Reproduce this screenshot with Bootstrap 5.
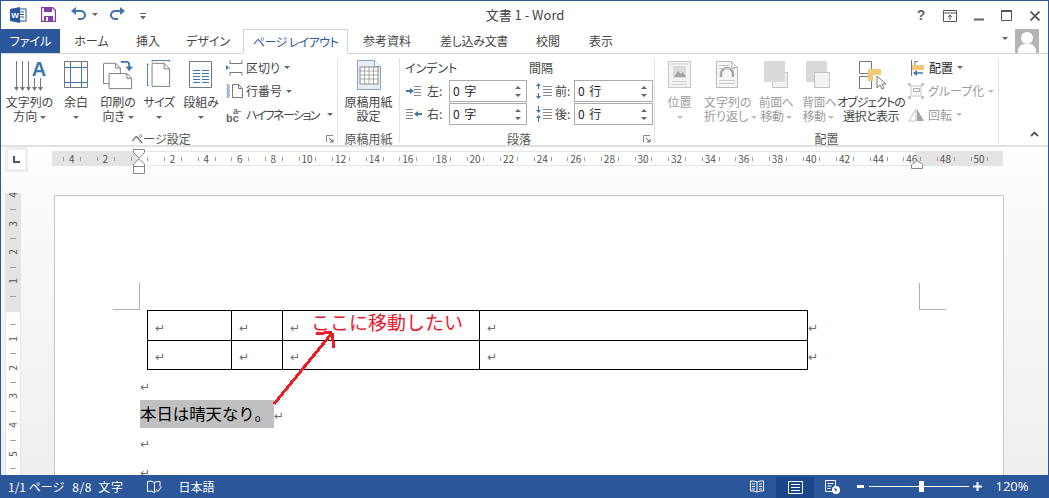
<!DOCTYPE html>
<html lang="ja">
<head>
<meta charset="UTF-8">
<title>文書 1 - Word</title>
<link href="https://cdn.jsdelivr.net/npm/bootstrap@5.3.0/dist/css/bootstrap.min.css" rel="stylesheet">
<style>
    html, body { height: 100%; overflow: hidden; }
    body { font-family: "Noto Sans CJK JP", "Liberation Sans", sans-serif; font-size: 12px; color: #444; background: #fff; font-feature-settings: "palt"; }
    .wd-app { width: 1049px; height: 498px; border: solid #2b579a; border-width: 1px 1px 0 1px; }
    svg { display: block; flex: none; }

    /* title bar */
    .wd-title { height: 28px; flex: none; }
    .wd-qat { width: 296px; padding: 6px 0 0 9px; }
    .wd-doc-name { font-size: 13px; line-height: 28px; width: 456px; text-align: center; }
    .wd-winbtns { margin-left: auto; padding: 6px 8px 0 0; }
    .wd-caret { display: inline-block; width: 0; height: 0; border-style: solid; border-width: 3px 3px 0 3px; border-color: #666 transparent transparent transparent; vertical-align: middle; }
    .wd-caret-off { border-top-color: #bbb; }

    /* tabs */
    .wd-tabs { height: 25px; flex: none; border-bottom: 1px solid #d4d4d4; }
    .wd-tab { height: 25px; line-height: 23px; text-align: center; color: #444; font-size: 12px; }
    .wd-tab-file { width: 59px; background: #2b579a; color: #fff; height: 24px; }
    .wd-tab-1 { width: 63px; } .wd-tab-2 { width: 50px; } .wd-tab-3 { width: 70px; }
    .wd-tab-on { width: 105px; border: 1px solid #d4d4d4; border-bottom-color: #fff; color: #2b579a; letter-spacing: -.6px; }
    .wd-tab-5 { width: 78px; } .wd-tab-6 { width: 96px; letter-spacing: -.3px; } .wd-tab-7 { width: 52px; } .wd-tab-8 { width: 54px; }
    .wd-acct { margin-left: auto; padding-right: 9px; }
    .wd-avatar { width: 24px; height: 24px; background: #b4b4b4; overflow: hidden; margin-left: 7px; }

    /* ribbon */
    .wd-ribbon { height: 93px; flex: none; border-bottom: 2px solid #e1e1e1; position: relative; padding-top: 4px; }
    .wd-group { height: 85px; position: relative; border-right: 1px solid #e1e1e1; }
    .wd-g-page { width: 337px; }
    .wd-g-sheet { width: 62px; }
    .wd-g-para { width: 255px; }
    .wd-g-arr { width: 344px; }
    .wd-g-body { height: 75px; }
    .wd-g-label { height: 10px; line-height: 12px; text-align: center; color: #555; }
    .wd-g-label-pad { padding-right: 16px; }
    .wd-launch { position: absolute; right: 3px; bottom: 0; }
    .wd-big { line-height: 14px; white-space: nowrap; text-align: center; flex: none; }
    .wd-big .wd-ico { height: 37px; display: flex; align-items: flex-start; justify-content: center; }
    .wd-big-off { color: #9c9c9c; }
    .w50 { width: 49px; } .w44 { width: 44px; } .w40 { width: 40px; } .w42 { width: 42px; }
    .w61 { width: 61px; } .w46 { width: 46px; } .w52 { width: 52px; } .w32 { width: 32px; } .w74 { width: 74px; }
    .wd-narrow { letter-spacing: -.55px; }
    .wd-small-col { margin-top: -2px; }
    .wd-small { height: 23.5px; white-space: nowrap; }
    .wd-small svg { margin-right: 3px; }
    .wd-hyph { letter-spacing: -1.6px; }
    .wd-off { color: #9c9c9c; }
    .wd-para-head { height: 22px; padding-left: 5px; line-height: 20px; }
    .wd-para-head span:first-child { width: 124px; }
    .wd-para-row { height: 23px; }
    .wd-spin { width: 78px; height: 22px; padding: 0 0 0 3px; border: 1px solid #ababab; border-radius: 0; color: #222; font-size: 12px; line-height: 20px; background: #fff; position: relative; word-spacing: 2px; }
    .wd-spin-arrows { position: absolute; right: 4px; top: 4px; }
    .wd-collapse { position: absolute; right: 9px; bottom: 8px; }

    /* work area */
    .wd-work { flex: 1 1 auto; min-height: 0; position: relative; overflow: hidden; background: linear-gradient(#fff, #fbfbfb 40px, #efefef 100%); }
    .wd-ruler-row { height: 26px; flex: none; }
    .wd-corner { width: 23px; height: 25px; margin-left: 4px; background: #eee; padding: 3px; }
    .wd-corner-in { background: #fff; width: 100%; height: 100%; }
    .wd-hruler { width: 951px; height: 15px; margin: 4px 0 0 24px; background: #fff; border: solid #e6e6e6; border-width: 1px 0; position: relative; font-size: 10px; line-height: 13px; color: #555; }
    .wd-hr-off { position: absolute; top: -1px; bottom: -1px; background: #e4e4e4; }
    .wd-hr-num { position: absolute; top: 0; width: 16px; margin-left: -8px; text-align: center; }
    .wd-hr-tick { position: absolute; top: 5px; width: 1px; height: 4px; background: #a0a0a0; }
    .wd-marker { position: absolute; top: -3px; }
    .wd-doc-row { flex: 1 1 auto; min-height: 0; }
    .wd-vruler { width: 16px; margin: 20px 0 0 4px; height: 290px; background: #fff; border: solid #e6e6e6; border-width: 0 1px; position: relative; font-size: 10px; color: #555; flex: none; }
    .wd-vr-off { position: absolute; left: -1px; right: -1px; top: 0; height: 119px; background: #e4e4e4; }
    .wd-vr-num { position: absolute; left: 0; width: 14px; height: 14px; line-height: 14px; margin-top: -7px; text-align: center; transform: rotate(-90deg); }
    .wd-vr-tick { position: absolute; left: 4px; width: 6px; height: 1px; background: #a0a0a0; }
    .wd-page { width: 950px; height: 320px; margin: 22px 0 0 33px; background: #fff; border: solid #c6c6c6; border-width: 1px 1px 0 1px; padding: 114px 0 0 85px; position: relative; flex: none; font-size: 16.8px; color: #000; }
    .wd-crop { position: absolute; width: 27px; height: 27px; border: solid #b0b0b0; }
    .wd-crop-l { left: 58px; top: 87px; border-width: 0 1px 1px 0; }
    .wd-crop-r { left: 864px; top: 87px; border-width: 0 0 1px 1px; }
    .wd-tbl { border-collapse: collapse; margin-left: 7px; table-layout: fixed; width: 669px; }
    .wd-tbl td { border: 1px solid #000; height: 29.5px; padding: 0 0 0 7px; vertical-align: middle; }
    .wd-tbl td.wd-row-end { border: 0; width: 9px; padding: 0 0 0 0; }
    .wd-ret { font-family: "DejaVu Sans", sans-serif; font-size: 12px; color: #6e6e6e; line-height: 1; }
    .wd-line { height: 28.6px; line-height: 27px; }
    .wd-line-first { margin-top: 1px; }
    .wd-sel { display: inline-block; background: #c0c0c0; height: 28px; line-height: 27px; width: 134px; white-space: nowrap; font-size: 16.4px; font-feature-settings: normal; margin-right: -4px; }
    .wd-red { position: absolute; left: 256px; top: 114px; font-size: 19px; line-height: 24px; color: #f0182e; white-space: nowrap; font-feature-settings: normal; }
    .wd-arrow { position: absolute; left: 0; top: 0; pointer-events: none; }

    /* status bar */
    .wd-status { height: 23px; flex: none; background: #2b579a; color: #fff; font-size: 12px; line-height: 23px; }
    .wd-st-item { margin-left: 7px; white-space: nowrap; }
    .wd-st-view { width: 38px; height: 21px; display: flex; align-items: center; justify-content: center; margin-top: 1px; }
    .wd-st-on { background: #19478a; }
    .wd-slider { width: 100px; height: 1px; background: #fff; position: relative; margin: 0 4px 0 5px; }
    .wd-thumb { position: absolute; left: 50px; top: -5px; width: 5px; height: 11px; background: #fff; }
    .wd-zoom { width: 52px; text-align: center; font-family: "Open Sans", sans-serif; font-size: 13px; margin-left: 4px; margin-right: 10px; }
</style>
</head>
<body>
<div class="wd-app d-flex flex-column">

    <!-- title bar -->
    <div class="wd-title d-flex">
        <div class="wd-qat d-flex align-items-start">
            <svg width="17" height="16" viewBox="0 0 17 16"><rect x="6" y="2" width="10" height="12" fill="#fff" stroke="#2b579a"/><path d="M9 5h5M9 7.5h5M9 10h5" stroke="#2b579a"/><path d="M0 2l10-2v16l-10-2z" fill="#2b579a"/><text x="5" y="11" font-size="8" font-weight="700" fill="#fff" text-anchor="middle" font-family="Liberation Sans">W</text></svg>
            <svg width="15" height="15" viewBox="0 0 15 15" style="margin-left:14px"><path d="M.5.5h11l3 3v11H.5z" fill="#fff" stroke="#80409e" stroke-width="1.4"/><path d="M3 1h8v4H3z" fill="#80409e"/><path d="M3 9h9v5H3z" fill="#80409e"/><path d="M5 10h2v4H5z" fill="#fff"/></svg>
            <svg width="16" height="14" viewBox="0 0 16 14" style="margin-left:14px"><path d="M4.5 4h6a4 4 0 0 1 1 8H8" fill="none" stroke="#3f76b0" stroke-width="2"/><path d="M6 0v8L1 4z" fill="#3f76b0"/></svg>
            <span class="wd-caret" style="margin:6px 0 0 6px"></span>
            <svg width="16" height="14" viewBox="0 0 16 14" style="margin-left:12px"><path d="M11.5 4h-6a4 4 0 0 0-1 8H8" fill="none" stroke="#3f76b0" stroke-width="2"/><path d="M10 0v8l5-4z" fill="#3f76b0"/></svg>
            <svg width="6" height="7" viewBox="0 0 6 7" style="margin:6px 0 0 14px"><path d="M0 .5h6" stroke="#666"/><path d="M0 3h6L3 6.5z" fill="#666"/></svg>
        </div>
        <div class="wd-doc-name">文書 1 - Word</div>
        <div class="wd-winbtns d-flex align-items-start">
            <svg width="12" height="16" viewBox="0 0 12 16"><text x="6" y="13" font-size="14" font-weight="700" fill="#666" text-anchor="middle" font-family="Liberation Sans">?</text></svg>
            <svg width="14" height="12" viewBox="0 0 14 12" style="margin:3px 0 0 16px"><path d="M.5.5h13v11H.5zM.5 3h13" fill="none" stroke="#555"/><path d="M7 10V5M5 7l2-2 2 2" fill="none" stroke="#555"/></svg>
            <svg width="10" height="12" viewBox="0 0 10 12" style="margin:3px 0 0 17px"><path d="M0 9.5h10" stroke="#666" stroke-width="2"/></svg>
            <svg width="11" height="11" viewBox="0 0 11 11" style="margin:3px 0 0 17px"><path d="M.5.5h10v10H.5z" fill="none" stroke="#555"/><path d="M0 1h11" stroke="#555" stroke-width="2"/></svg>
            <svg width="10" height="10" viewBox="0 0 10 10" style="margin:4px 0 0 18px"><path d="M.5.5l9 9M9.5.5l-9 9" stroke="#555" stroke-width="1.8"/></svg>
        </div>
    </div>

    <!-- tabs -->
    <div class="wd-tabs d-flex">
        <div class="wd-tab wd-tab-file">ファイル</div>
        <div class="wd-tab wd-tab-1">ホーム</div>
        <div class="wd-tab wd-tab-2">挿入</div>
        <div class="wd-tab wd-tab-3">デザイン</div>
        <div class="wd-tab wd-tab-on">ページ レイアウト</div>
        <div class="wd-tab wd-tab-5">参考資料</div>
        <div class="wd-tab wd-tab-6">差し込み文書</div>
        <div class="wd-tab wd-tab-7">校閲</div>
        <div class="wd-tab wd-tab-8">表示</div>
        <div class="wd-acct d-flex">
            <span class="wd-caret mt-2"></span>
            <div class="wd-avatar"><svg width="24" height="24" viewBox="0 0 24 24"><circle cx="12" cy="9" r="6" fill="#fff"/><path d="M3 24v-3q1-5 6-6h6q5 1 6 6v3z" fill="#fff"/></svg></div>
        </div>
    </div>

    <!-- ribbon -->
    <div class="wd-ribbon d-flex">
        <div class="wd-group wd-g-page">
            <div class="wd-g-body d-flex">
                <div class="wd-big w50 ms-1">
                    <div class="wd-ico"><svg width="48" height="36" viewBox="0 0 48 36"><g stroke="#777" fill="#777"><path d="M10.500 3v27M16.500 3v27M22.500 3v27M28.500 20v10M34.500 20v10" fill="none"/><path d="M8 29h5l-2.500 4zM14 29h5l-2.500 4zM20 29h5l-2.500 4zM26 29h5l-2.500 4zM32 29h5l-2.500 4z" stroke="none"/></g><text x="33" y="18" font-size="20" font-weight="700" fill="#3f76b0" text-anchor="middle" font-family="Liberation Sans">A</text></svg></div>
                    文字列の<br>方向 <span class="wd-caret"></span>
                </div>
                <div class="wd-big w44">
                    <div class="wd-ico"><svg width="24" height="30" viewBox="0 0 24 30"><path d="M.500 3.500h23v26H.500z" fill="#fff" stroke="#777"/><path d="M6.500 4v25M17.500 4v25M1 9.500h22M1 24.500h22" stroke="#3f76b0"/></svg></div>
                    余白<br><span class="wd-caret"></span>
                </div>
                <div class="wd-big w40">
                    <div class="wd-ico"><svg width="30" height="34" viewBox="0 0 32 34"><path d="M.5 4.500h13l5 5v12M7 26H.5v-21" fill="#fff" stroke="#777"/><path d="M6.500 15.500h19l5 5v11h-24z" fill="#fff" stroke="#777"/><path d="M25.500 15.500v5h5M13.500 4.500v5h5" fill="none" stroke="#777"/><path d="M19 3h6a3 3 0 0 1 3 3v3" fill="none" stroke="#3f76b0" stroke-width="2"/><path d="M24 8h8l-4 5z" fill="#3f76b0"/></svg></div>
                    印刷の<br>向き <span class="wd-caret"></span>
                </div>
                <div class="wd-big w42 wd-narrow">
                    <div class="wd-ico"><svg width="24" height="30" viewBox="0 0 26 30"><path d="M5.500 4.500h13l6 6v19h-19z" fill="#fff" stroke="#777"/><path d="M18.500 4.500v6h6" fill="none" stroke="#777"/><path d="M5.500 1v2M24.500 1v2M5.500 1.500h19M.500 5v24M0 5.500h2M0 28.500h2" stroke="#3f76b0"/></svg></div>
                    サイズ<br><span class="wd-caret"></span>
                </div>
                <div class="wd-big w42">
                    <div class="wd-ico"><svg width="24" height="30" viewBox="0 0 24 30"><path d="M.500 3.500h22v26H.500z" fill="#fff" stroke="#777"/><path d="M4 12.500h7M13 12.500h7M4 15.500h7M13 15.500h7M4 18.500h7M13 18.500h7M4 21.500h7M13 21.500h7M4 24.500h7M13 24.500h7" stroke="#3f76b0"/></svg></div>
                    段組み<br><span class="wd-caret"></span>
                </div>
                <div class="wd-small-col ms-1">
                    <div class="wd-small d-flex align-items-center"><svg width="17" height="16" viewBox="0 0 17 16"><path d="M4 .5v3h12v-3M4 15.500v-3h12v3" fill="none" stroke="#777"/><path d="M0 5v5l3-2.500z" fill="#3f76b0"/><path d="M3 8h1" stroke="#3f76b0"/></svg>区切り <span class="wd-caret ms-1"></span></div>
                    <div class="wd-small d-flex align-items-center"><svg width="17" height="16" viewBox="0 0 17 16"><path d="M6.500 1.500h6l4 4v9h-10z" fill="#fff" stroke="#777"/><path d="M12.500 1.500v4h4" fill="none" stroke="#777"/><path d="M.5 2h3M.5 6h3M.5 10h3M.5 14h3M1 4h3M1 8h3M1 12h3" stroke="#3f76b0"/></svg>行番号 <span class="wd-caret ms-1"></span></div>
                    <div class="wd-small d-flex align-items-center"><svg width="17" height="16" viewBox="0 0 17 16" style="margin-right:3px"><text x="0" y="15" font-size="11" font-weight="700" fill="#666" font-family="Liberation Sans">bc</text><text x="7" y="7" font-size="9" font-weight="700" fill="#666" font-family="Liberation Sans">a-</text></svg><span class="wd-hyph">ハイフネーション</span> <span class="wd-caret ms-2"></span></div>
                </div>
            </div>
            <div class="wd-g-label wd-g-label-pad">ページ設定</div>
            <svg class="wd-launch" width="8" height="8" viewBox="0 0 8 8"><path d="M.5 7V.5H7" fill="none" stroke="#888"/><path d="M3 3l4 4M4 7h3V4" fill="none" stroke="#666"/></svg>
        </div>

        <div class="wd-group wd-g-sheet">
            <div class="wd-g-body">
                <div class="wd-big w61">
                    <div class="wd-ico"><svg width="24" height="32" viewBox="0 0 24 32"><path d="M.500 2.500h17l6 6v23H.500z" fill="#e9eef6" stroke="#8aa3c4"/><path d="M17.500 2.500v6h6" fill="#fff" stroke="#8aa3c4"/><rect x="3" y="9" width="18" height="17" fill="#fff" stroke="#8a8a8a"/><path d="M3 13h18M3 17h18M3 21h18M7.500 9v17M12 9v17M16.500 9v17" stroke="#8a8a8a" stroke-width=".7"/></svg></div>
                    原稿用紙<br>設定
                </div>
            </div>
            <div class="wd-g-label">原稿用紙</div>
        </div>

        <div class="wd-group wd-g-para">
            <div class="wd-g-body">
                <div class="wd-para-head d-flex"><span>インデント</span><span>間隔</span></div>
                <div class="wd-para-row d-flex ps-1 align-items-start">
                    <div class="d-flex align-items-center" style="width:127px">
                        <svg width="16" height="12" viewBox="0 0 16 12" style="margin:0 5px 0 2px"><path d="M8 1.500h7M8 4.500h7M8 7.500h7M8 10.500h7" stroke="#888"/><path d="M0 6h6" stroke="#3f76b0" stroke-width="2"/><path d="M4 3l4 3-4 3z" fill="#3f76b0"/></svg>
                        <span style="width:22px">左:</span>
                        <div class="form-control wd-spin">0 字<svg class="wd-spin-arrows" width="7" height="13" viewBox="0 0 7 13"><path d="M0 4h6L3 1zM0 9h6l-3 3z" fill="#666"/></svg></div>
                    </div>
                    <div class="d-flex align-items-center" style="margin-left:4px">
                        <svg width="18" height="18" viewBox="0 0 18 18" style="margin-right:2px"><path d="M8 4.500h9M8 7.500h9M8 10.500h9M8 13.500h9" stroke="#888"/><path d="M3.500 3v4M3.500 11v4" stroke="#3f76b0"/><path d="M1 4l2.500-3L6 4zM1 14l2.500 3L6 14z" fill="#3f76b0"/></svg>
                        <span style="width:19px">前:</span>
                        <div class="form-control wd-spin" style="width:79px">0 行<svg class="wd-spin-arrows" width="7" height="13" viewBox="0 0 7 13"><path d="M0 4h6L3 1zM0 9h6l-3 3z" fill="#666"/></svg></div>
                    </div>
                </div>
                <div class="wd-para-row d-flex ps-1 align-items-start">
                    <div class="d-flex align-items-center" style="width:127px">
                        <svg width="16" height="12" viewBox="0 0 16 12" style="margin:0 5px 0 2px"><path d="M0 1.500h7M0 4.500h7M0 7.500h7M0 10.500h7" stroke="#888"/><path d="M10 6h6" stroke="#3f76b0" stroke-width="2"/><path d="M12 3L8 6l4 3z" fill="#3f76b0"/></svg>
                        <span style="width:22px">右:</span>
                        <div class="form-control wd-spin">0 字<svg class="wd-spin-arrows" width="7" height="13" viewBox="0 0 7 13"><path d="M0 4h6L3 1zM0 9h6l-3 3z" fill="#666"/></svg></div>
                    </div>
                    <div class="d-flex align-items-center" style="margin-left:4px">
                        <svg width="18" height="18" viewBox="0 0 18 18" style="margin-right:2px"><path d="M8 4.500h9M8 7.500h9M8 10.500h9M8 13.500h9" stroke="#888"/><path d="M3.500 1v4M3.500 13v4" stroke="#3f76b0"/><path d="M1 5l2.500 3L6 5zM1 13l2.500-3L6 13z" fill="#3f76b0"/></svg>
                        <span style="width:19px">後:</span>
                        <div class="form-control wd-spin" style="width:79px">0 行<svg class="wd-spin-arrows" width="7" height="13" viewBox="0 0 7 13"><path d="M0 4h6L3 1zM0 9h6l-3 3z" fill="#666"/></svg></div>
                    </div>
                </div>
            </div>
            <div class="wd-g-label wd-g-label-pad">段落</div>
            <svg class="wd-launch" width="8" height="8" viewBox="0 0 8 8"><path d="M.5 7V.5H7" fill="none" stroke="#888"/><path d="M3 3l4 4M4 7h3V4" fill="none" stroke="#666"/></svg>
        </div>

        <div class="wd-group wd-g-arr">
            <div class="wd-g-body d-flex">
                <div class="wd-big w50 wd-big-off">
                    <div class="wd-ico"><svg width="24" height="30" viewBox="0 0 24 30"><path d="M.500 3.500h22v26H.500z" fill="#f4f2f4" stroke="#c9c5c9"/><rect x="5" y="8" width="13" height="12" fill="#dcd9dc"/><path d="M6 19l4-6 3 3 2-2 3 5z" fill="#a7a4a7"/><path d="M4 23.500h15M4 26.500h15M2 6h19" stroke="#d4d1d4"/></svg></div>
                    位置<br><span class="wd-caret wd-caret-off"></span>
                </div>
                <div class="wd-big w46 wd-big-off">
                    <div class="wd-ico"><svg width="22" height="30" viewBox="0 0 22 30"><path d="M.500 3.500h15l6 6v20H.500z" fill="#f7f6f7" stroke="#bcb9bc"/><path d="M15.500 3.500v6h6" fill="none" stroke="#bcb9bc"/><path d="M5 19v-3a6 6 0 0 1 12 0v3" fill="none" stroke="#a9a6a9" stroke-width="2.500"/><path d="M3 7.500h10M3 10.500h16M3 22.500h16M3 25.500h16" stroke="#c9c5c9"/></svg></div>
                    文字列の<br>折り返し <span class="wd-caret wd-caret-off"></span>
                </div>
                <div class="wd-big w52 wd-big-off wd-narrow">
                    <div class="wd-ico"><svg width="26" height="30" viewBox="0 0 26 30"><path d="M9.500 14.500h15v15h-15z" fill="#f3f1f3" stroke="#c4c1c4"/><rect x="1" y="3" width="21" height="21" fill="#dcd9dc"/></svg></div>
                    前面へ<br>移動 <span class="wd-caret wd-caret-off"></span>
                </div>
                <div class="wd-big w32 wd-big-off wd-narrow">
                    <div class="wd-ico"><svg width="26" height="30" viewBox="0 0 26 30"><rect x="1" y="3" width="21" height="21" fill="#dcd9dc"/><path d="M9.500 14.500h15v15h-15z" fill="#f3f1f3" stroke="#c4c1c4"/></svg></div>
                    背面へ<br>移動 <span class="wd-caret wd-caret-off"></span>
                </div>
                <div class="wd-big w74 wd-narrow">
                    <div class="wd-ico"><svg width="30" height="32" viewBox="0 0 30 32"><path d="M3.500 3.500h12v12h-12zM3.500 18.500h12v12h-12z" fill="#fff" stroke="#777"/><path d="M12 11h13v6h-8v6h-5z" fill="#f0c878"/><path d="M21 18v12l3-3 2 4 2-1-2-4h4z" fill="#fff" stroke="#777"/></svg></div>
                    <span style="letter-spacing:-1px">オブジェクトの</span><br>選択と表示
                </div>
                <div class="wd-small-col">
                    <div class="wd-small d-flex align-items-center"><svg width="14" height="16" viewBox="0 0 14 16" style="margin-right:5px;margin-left:2px"><path d="M1.500 0v16M5 1.500h3M5 1v4" stroke="#777" fill="none"/><rect x="2" y="5" width="12" height="5" fill="#f0c878"/><path d="M13 13H5" stroke="#3f76b0" stroke-width="1.500"/><path d="M7 10l-4 3 4 3z" fill="#3f76b0"/></svg><span class="text-body">配置</span> <span class="wd-caret ms-1"></span></div>
                    <div class="wd-small d-flex align-items-center wd-off"><svg width="16" height="16" viewBox="0 0 16 16" style="margin-right:4px"><path d="M3 3h10v10H3z" fill="none" stroke="#c4c1c4"/><path d="M0 0h3v3H0zM13 0h3v3h-3zM0 13h3v3H0zM13 13h3v3h-3z" fill="#c4c1c4"/><path d="M5.500 5.500h6v3h-6z" fill="none" stroke="#b0adb0"/></svg>グループ化 <span class="wd-caret wd-caret-off ms-1"></span></div>
                    <div class="wd-small d-flex align-items-center wd-off"><svg width="16" height="14" viewBox="0 0 16 14" style="margin-right:4px"><path d="M8 1L1 13h7z" fill="#fff" stroke="#c4c1c4"/><path d="M9 1l7 12H9z" fill="#a7a4a7"/></svg>回転 <span class="wd-caret wd-caret-off ms-1"></span></div>
                </div>
            </div>
            <div class="wd-g-label">配置</div>
        </div>

        <svg class="wd-collapse" width="9" height="6" viewBox="0 0 9 6"><path d="M1 5l3.500-3.500L8 5" fill="none" stroke="#555" stroke-width="1.800"/></svg>
    </div>

    <!-- rulers and page -->
    <div class="wd-work d-flex flex-column">
        <div class="wd-ruler-row d-flex">
            <div class="wd-corner"><div class="wd-corner-in d-flex align-items-center justify-content-center"><svg width="7" height="7" viewBox="0 0 7 7"><path d="M1 0v6h6" fill="none" stroke="#555" stroke-width="2"/></svg></div></div>
            <div class="wd-hruler" id="hruler">
                <div class="wd-hr-off" style="left:0;width:87px"></div>
                <div class="wd-hr-off" style="left:863px;right:0"></div>
            </div>
        </div>
        <div class="wd-doc-row d-flex">
            <div class="wd-vruler" id="vruler"><div class="wd-vr-off"></div></div>
            <div class="wd-page">
                <div class="wd-crop wd-crop-l"></div>
                <div class="wd-crop wd-crop-r"></div>
                <table class="wd-tbl">
                    <colgroup><col style="width:84px"><col style="width:51px"><col style="width:197px"><col style="width:328px"><col style="width:9px"></colgroup>
                    <tr><td><span class="wd-ret">↵</span></td><td><span class="wd-ret">↵</span></td><td><span class="wd-ret">↵</span></td><td><span class="wd-ret">↵</span></td><td class="wd-row-end"><span class="wd-ret">↵</span></td></tr>
                    <tr><td><span class="wd-ret">↵</span></td><td><span class="wd-ret">↵</span></td><td><span class="wd-ret">↵</span></td><td><span class="wd-ret">↵</span></td><td class="wd-row-end"><span class="wd-ret">↵</span></td></tr>
                </table>
                <div class="wd-line wd-line-first"><span class="wd-ret">↵</span></div>
                <div class="wd-line"><span class="wd-sel">本日は晴天なり。</span> <span class="wd-ret">↵</span></div>
                <div class="wd-line"><span class="wd-ret">↵</span></div>
                <div class="wd-line"><span class="wd-ret">↵</span></div>
                <div class="wd-red">ここに移動したい</div>
            </div>
        </div>
        <svg class="wd-arrow" width="1049" height="328" viewBox="0 147 1049 328" shape-rendering="crispEdges"><path d="M273 404L331 333M315 333.500L331 332.500M331 333L333 348" fill="none" stroke="#ed1c24" stroke-width="3"/></svg>
    </div>

    <!-- status bar -->
    <div class="wd-status d-flex">
        <span class="wd-st-item">1/1 ページ</span>
        <span class="wd-st-item" style="margin-left:8px;word-spacing:3px;letter-spacing:.6px">8/8 文字</span>
        <svg width="15" height="14" viewBox="0 0 15 14" style="margin:5px 0 0 23px"><path d="M7.500 2.500Q4 0 .5 1.500v10Q4 10 7.500 12.500q1-1 2-1.500M7.500 2.500Q10 1 13 1.500v5M7.500 2.500v10" fill="none" stroke="#fff"/><path d="M9 9l2 2.500 3.500-5" fill="none" stroke="#fff"/></svg>
        <span class="wd-st-item" style="margin-left:17px">日本語</span>
        <div class="ms-auto d-flex align-items-center">
            <svg width="14" height="13" viewBox="0 0 14 13"><path d="M7 2Q4 .5.500 1v10Q4 10.500 7 12q3-1.500 6.500-1V1Q10 .5 7 2zM7 2v10M2 4h3M2 6.500h3M2 9h3M9 4h3M9 6.500h3M9 9h3" fill="none" stroke="#fff"/></svg>
            <div class="wd-st-view wd-st-on" style="margin-left:12px"><svg width="15" height="13" viewBox="0 0 15 13"><path d="M.5.5h14v12H.5zM3 3.500h9M3 6.500h9M3 9.500h9" fill="none" stroke="#fff"/></svg></div>
            <svg width="15" height="14" viewBox="0 0 15 14" style="margin-left:11px"><path d="M.5.5h10v11H.5zM2.500 3.500h6M2.500 6h4M2.500 8.500h3" fill="none" stroke="#fff"/><circle cx="11" cy="10" r="4" fill="#fff"/><path d="M9 8l3 1-1 3z" fill="#2b579a"/></svg>
            <svg width="7" height="3" viewBox="0 0 7 3" style="margin-left:17px"><path d="M0 0h7v3H0z" fill="#fff"/></svg>
            <div class="wd-slider"><div class="wd-thumb"></div></div>
            <svg width="9" height="9" viewBox="0 0 9 9"><path d="M0 3.500h9v2H0zM3.500 0h2v9h-2z" fill="#fff"/></svg>
            <div class="wd-zoom">120%</div>
        </div>
    </div>
</div>

<script src="https://cdn.jsdelivr.net/npm/bootstrap@5.3.0/dist/js/bootstrap.bundle.min.js"></script>
<script>
    // horizontal ruler: origin at 87px inside the bar, 16.8px per character
    const hr = document.getElementById("hruler");
    const hOrigin = 87, hUnit = 16.8;
    for (let n = -4; n <= 50; n += 2) {
        if (n === 0) continue;
        hr.insertAdjacentHTML("beforeend", `<div class="wd-hr-num" style="left:${hOrigin + n * hUnit}px">${Math.abs(n)}</div>`);
    }
    for (let n = -5; n <= 50; n++) {
        let x = hOrigin + (n + 0.5) * hUnit;
        if (x > 0 && x < 951) hr.insertAdjacentHTML("beforeend", `<div class="wd-hr-tick" style="left:${x}px"></div>`);
    }
    hr.insertAdjacentHTML("beforeend", `<svg class="wd-marker" style="left:${hOrigin - 6}px" width="12" height="27" viewBox="0 0 12 27"><path d="M.5.500h11v3L6 9 .5 3.500z" fill="#fff" stroke="#888"/><path d="M6 10l5.500 5v9.500H.5V15z" fill="#fff" stroke="#888"/><path d="M1 17.500h10" stroke="#888"/></svg>`);
    hr.insertAdjacentHTML("beforeend", `<svg class="wd-marker" style="left:${865 - 6}px;top:8px" width="12" height="9" viewBox="0 0 12 9"><path d="M6 .5l5.500 4v4H.5v-4z" fill="#fff" stroke="#888"/></svg>`);

    // vertical ruler: origin at 117px, 28.8px per line
    const vr = document.getElementById("vruler");
    const vOrigin = 117, vUnit = 28.8;
    for (let n = -4; n <= 5; n++) {
        if (n === 0) continue;
        vr.insertAdjacentHTML("beforeend", `<div class="wd-vr-num" style="top:${vOrigin + n * vUnit}px">${Math.abs(n)}</div>`);
    }
    for (let n = -4; n <= 5; n++) {
        vr.insertAdjacentHTML("beforeend", `<div class="wd-vr-tick" style="top:${vOrigin + (n + 0.5) * vUnit}px"></div>`);
    }
</script>
</body>
</html>
